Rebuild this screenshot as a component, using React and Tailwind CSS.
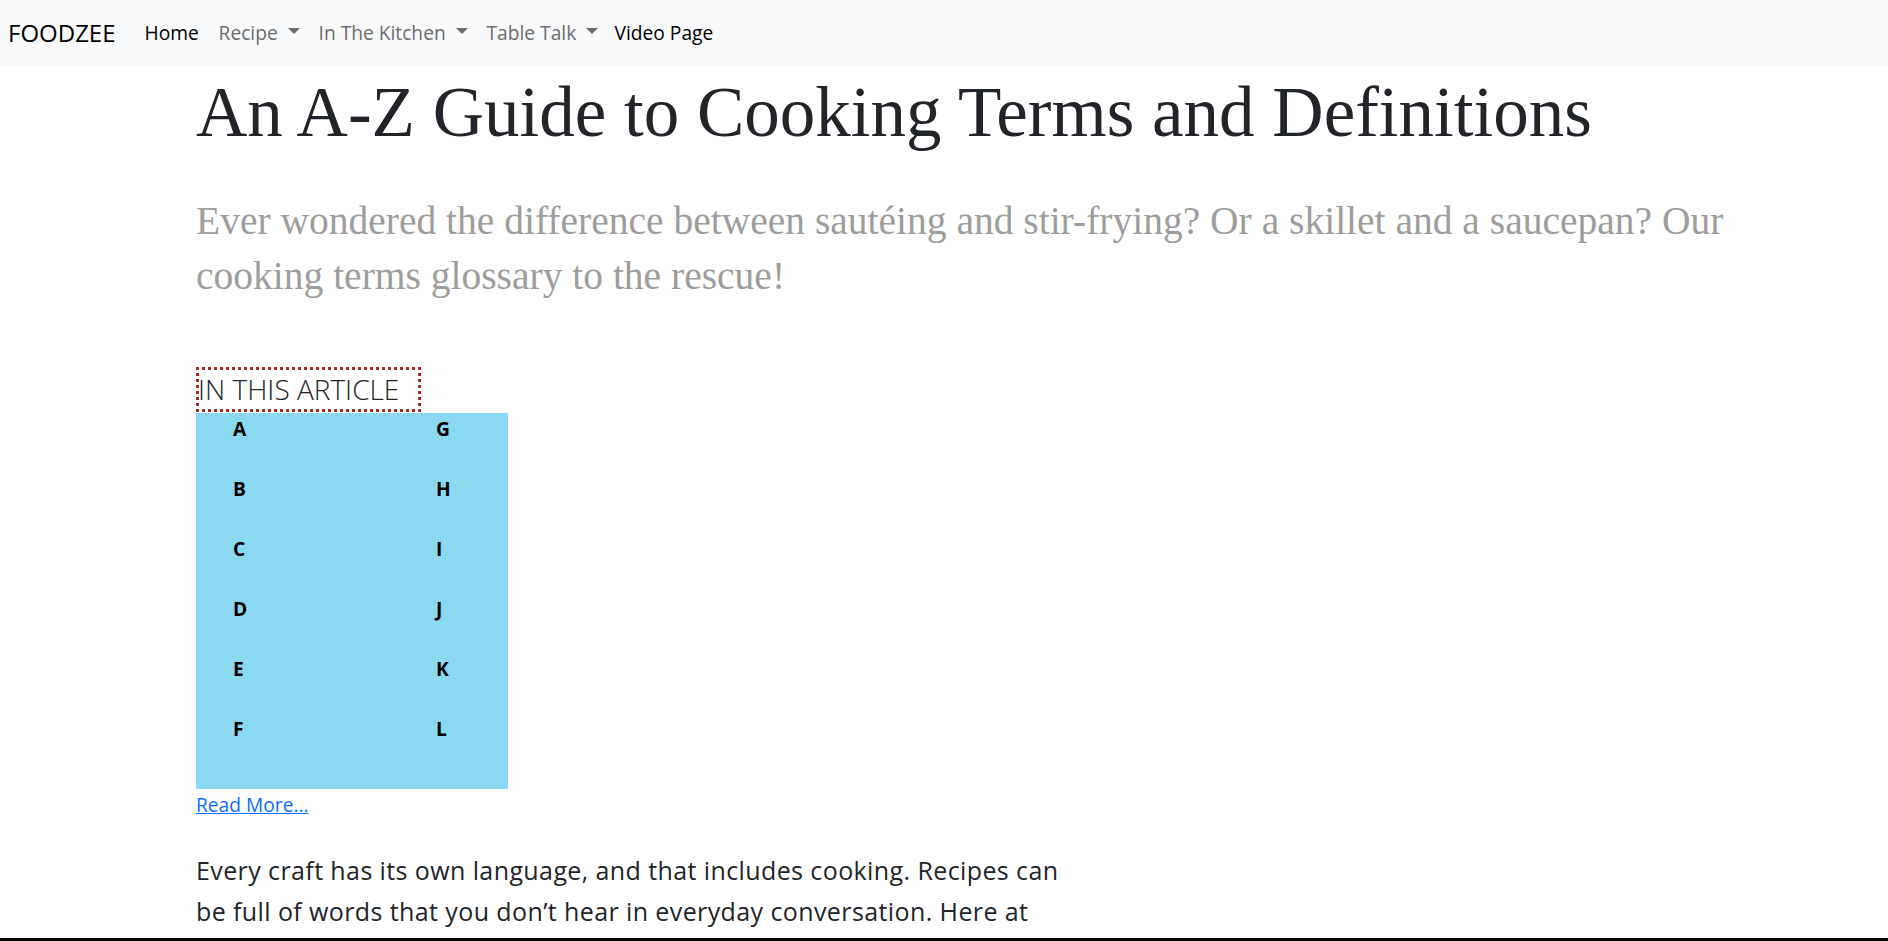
import React from 'react';

const navItems = [
  { label: 'Home', dropdown: false, active: true, width: 'w-[74px]' },
  { label: 'Recipe', dropdown: true, active: false, width: 'w-[100px]' },
  { label: 'In The Kitchen', dropdown: true, active: false, width: 'w-[168px]' },
  { label: 'Table Talk', dropdown: true, active: false, width: 'w-[128px]' },
  { label: 'Video Page', dropdown: false, active: true, width: 'w-[120px]' },
];

const leftLetters = ['A', 'B', 'C', 'D', 'E', 'F'];
const rightLetters = ['G', 'H', 'I', 'J', 'K', 'L'];

const Caret = () => (
  <span className="inline-block w-0 h-0 ml-[10px] mb-[3px] border-x-[6px] border-x-transparent border-t-[6px] border-t-current align-middle"></span>
);

const Navbar = () => (
  <nav className="h-[66px] shrink-0 bg-[#f8f9fa] flex items-center pl-[8px]">
    <a className="text-[24px] text-black mr-[29px] leading-none">FOODZEE</a>
    <ul className="flex items-center text-[19.2px]">
      {navItems.map((item) => (
        <li key={item.label} className={`${item.width} flex items-center`}>
          <a className={`flex items-center whitespace-nowrap ${item.active ? 'text-black' : 'text-[#6c6d6e]'}`}>
            {item.label}
            {item.dropdown && <Caret />}
          </a>
        </li>
      ))}
    </ul>
  </nav>
);

const App = () => {
  return (
    <div className="h-screen flex flex-col overflow-hidden bg-white text-[#212529]" style={{ fontFamily: '"Open Sans", sans-serif' }}>
      <Navbar />

      <main className="flex-1 min-h-0 overflow-hidden pl-[196px]">
        {/* Heading */}
        <h1 className="mt-[4px] text-[71px] leading-[84px] font-normal text-[#212529] whitespace-nowrap" style={{ fontFamily: '"Liberation Serif", serif' }}>
          An A-Z Guide to Cooking Terms and Definitions
        </h1>

        <p className="mt-[40px] w-[1560px] text-[39.5px] leading-[55px] text-[#9d9d9d]" style={{ fontFamily: '"Liberation Serif", serif' }}>
          Ever wondered the difference between sautéing and stir-frying? Or a skillet and a saucepan? Our cooking terms glossary to the rescue!
        </p>

        {/* In this article */}
        <div className="mt-[63px] w-[225px] h-[45px] border-[3px] border-dotted border-[#a52a2a] flex items-center">
          <span className="text-[28px] leading-[39px] font-[350] text-[#212529] whitespace-nowrap -ml-[1px]">IN THIS ARTICLE</span>
        </div>
        <div className="mt-[1px] w-[312px] h-[376px] bg-[#8bd8f1] pt-[2px] pl-[37px] flex">
          <ul className="w-[203px]">
            {leftLetters.map((l) => (
              <li key={l} className="h-[60px] text-[19.2px] leading-[28.8px] font-bold text-black">{l}</li>
            ))}
          </ul>
          <ul>
            {rightLetters.map((l) => (
              <li key={l} className="h-[60px] text-[19.2px] leading-[28.8px] font-bold text-black">{l}</li>
            ))}
          </ul>
        </div>
        <a className="block w-fit mt-[1px] text-[19.2px] leading-[30px] text-[#0d6efd] underline">Read More...</a>

        <p className="mt-[30px] w-[885px] text-[25px] leading-[41px] tracking-[0.4px] text-[#212529]">
          Every craft has its own language, and that includes cooking. Recipes can be full of words that you don’t hear in everyday conversation. Here at
        </p>
      </main>

      <div className="h-[3px] shrink-0 bg-black"></div>
    </div>
  );
};

export default App;
